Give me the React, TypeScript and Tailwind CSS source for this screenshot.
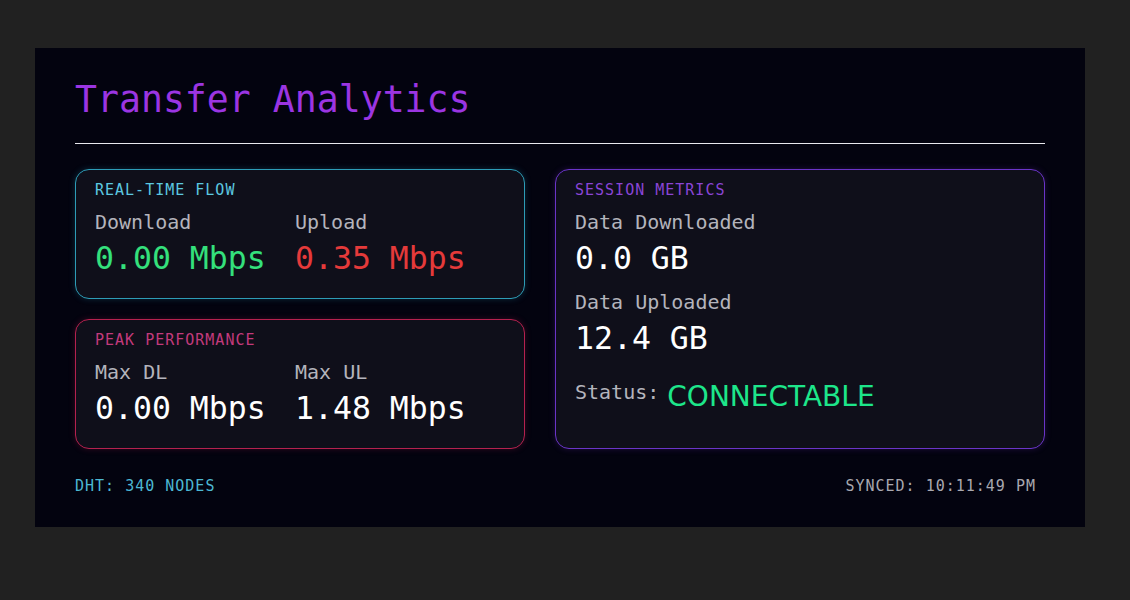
const mono = "font-['DejaVu_Sans_Mono',monospace]";

function Stat({ label, value, color }: { label: string; value: string; color: string }) {
  return (
    <div>
      <div className="text-[20px] leading-[24px] text-[#b4b4bc]">{label}</div>
      <div className={`mt-[6px] text-[31.5px] leading-[36px] ${color}`}>{value}</div>
    </div>
  );
}

const caption = "text-[15px] leading-[20px] tracking-[1px]";

export default function App() {
  return (
    <div className={`min-h-screen w-full bg-[#212121] pt-[48px] pl-[35px] ${mono}`}>
      <div className="w-[1050px] h-[479px] bg-[#03030f] px-[40px] pt-[34px]">
        {/* Title */}
        <h1 className="text-[36.5px] leading-[36px] text-[#9b35e2]">Transfer Analytics</h1>
        <div className="mt-[25px] h-px bg-[#e8e8ee]" />

        {/* Cards */}
        <div className="mt-[25px] grid grid-cols-[450px_1fr] gap-[30px]">
          <div className="flex flex-col gap-[20px]">
            <div className="h-[130px] rounded-[14px] border border-[#2d9cb6] bg-[#0f0f1a] px-[19px] pt-[10px] shadow-[0_0_6px_rgba(40,160,190,0.25)]">
              <div className={`${caption} text-[#5cc8e0]`}>REAL-TIME FLOW</div>
              <div className="mt-[10px] grid grid-cols-[200px_1fr]">
                <Stat label="Download" value="0.00 Mbps" color="text-[#34e07c]" />
                <Stat label="Upload" value="0.35 Mbps" color="text-[#e53a3a]" />
              </div>
            </div>
            <div className="h-[130px] rounded-[14px] border border-[#b5214f] bg-[#0f0f1a] px-[19px] pt-[10px] shadow-[0_0_6px_rgba(190,30,80,0.25)]">
              <div className={`${caption} text-[#c33a7c]`}>PEAK PERFORMANCE</div>
              <div className="mt-[10px] grid grid-cols-[200px_1fr]">
                <Stat label="Max DL" value="0.00 Mbps" color="text-white" />
                <Stat label="Max UL" value="1.48 Mbps" color="text-white" />
              </div>
            </div>
          </div>

          <div className="rounded-[14px] border border-[#6a34c8] bg-[#0f0f1a] px-[19px] pt-[10px] shadow-[0_0_6px_rgba(120,50,200,0.25)]">
            <div className={`${caption} text-[#8a45d6]`}>SESSION METRICS</div>
            <div className="mt-[10px]">
              <Stat label="Data Downloaded" value="0.0 GB" color="text-white" />
            </div>
            <div className="mt-[14px]">
              <Stat label="Data Uploaded" value="12.4 GB" color="text-white" />
            </div>
            <div className="mt-[21px] flex items-start gap-[8px]">
              <span className="mt-[3px] text-[20px] leading-[24px] text-[#b4b4bc]">Status:</span>
              <span className="mt-[3px] font-['DejaVu_Sans',sans-serif] text-[28px] leading-[34px] text-[#1de68a]">
                CONNECTABLE
              </span>
            </div>
          </div>
        </div>

        {/* Footer */}
        <div className={`mt-[27px] flex items-center justify-between ${caption}`}>
          <span className="text-[#4cb8d4]">DHT: 340 NODES</span>
          <span className="mr-[9px] text-[#a8a8b0]">SYNCED: 10:11:49 PM</span>
        </div>
      </div>
    </div>
  );
}
